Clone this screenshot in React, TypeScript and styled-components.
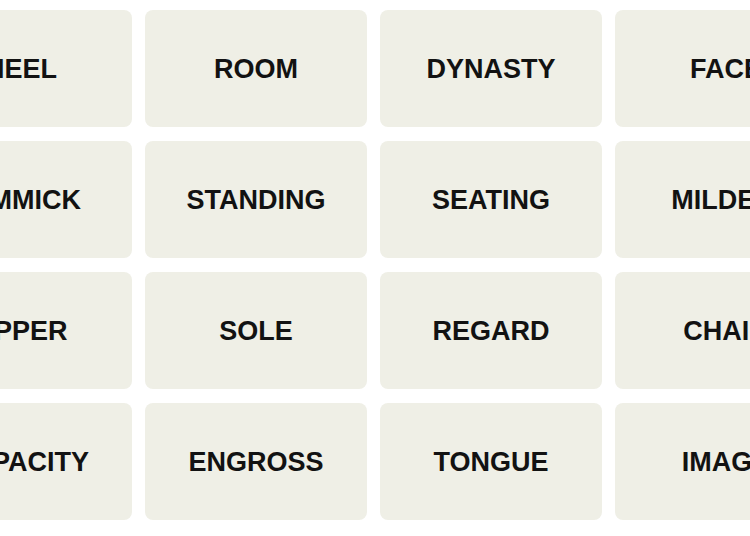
import React from "react";
import styled, { createGlobalStyle } from "styled-components";

const GlobalStyle = createGlobalStyle`
  html, body {
    margin: 0;
    padding: 0;
    background: #ffffff;
    overflow: hidden;
  }
`;

const Board = styled.div`
  display: grid;
  grid-template-columns: repeat(4, 222px);
  grid-auto-rows: 117px;
  column-gap: 13px;
  row-gap: 14px;
  padding-top: 10px;
  margin-left: -90px;
  width: max-content;
`;

const Tile = styled.button`
  display: flex;
  align-items: center;
  justify-content: center;
  border: none;
  border-radius: 8px;
  background: #efefe6;
  color: #121212;
  font-family: "Liberation Sans", Arial, sans-serif;
  font-weight: 700;
  font-size: 27px;
  text-transform: uppercase;
  padding: 2px 0 0;
  cursor: pointer;
`;

const words = [
  "Heel", "Room", "Dynasty", "Face",
  "Gimmick", "Standing", "Seating", "Mildew",
  "Upper", "Sole", "Regard", "Chair",
  "Capacity", "Engross", "Tongue", "Image",
];

const App = () => {
  return (
    <>
      <GlobalStyle />
      <Board>
        {words.map((w) => (
          <Tile key={w}>{w}</Tile>
        ))}
      </Board>
    </>
  );
};

export default App;
